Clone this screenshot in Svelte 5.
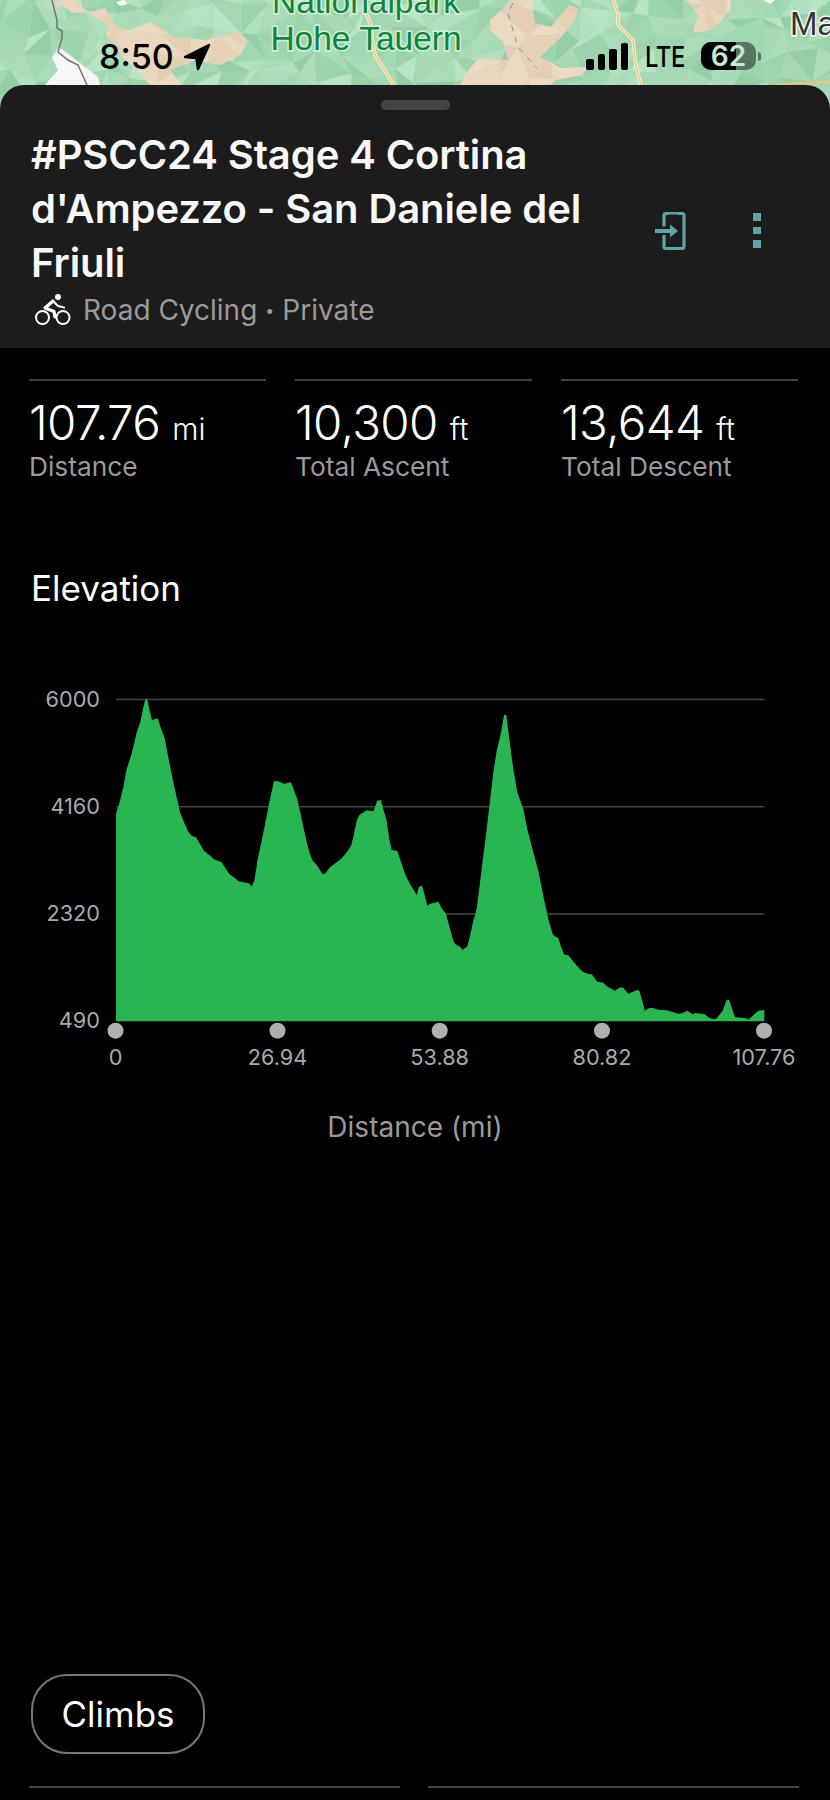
<script>
  // Elevation profile traced from the reference, [x, y] in page pixels relative to the chart box
  const left = [78,405,90,365,100,325,110,270,120,240,130,205,140,160,152,125,160,85,166,61,172,61,178,90,186,124,194,120,203,118,210,140,224,178,232,220,240,260,250,310,260,355,270,400,282,430,295,458,305,470,318,475,330,495,342,515,355,526,372,541,395,550,408,570,418,585,430,593,445,606,460,610,475,612,486,622,493,605,503,540,515,485,530,410,540,360,552,307,562,306,583,314,603,310,622,360,635,420,650,490,660,525,668,545,680,558,698,586,705,584,720,565,740,550,755,538,770,520,783,500,790,475,800,425,808,408,830,394,850,397,862,365,872,363,880,390,890,425,898,480,905,513,922,515,935,555,945,585,960,615,980,648,986,625,995,619,1002,640,1012,680,1020,674,1045,668,1055,688,1068,705,1080,750,1090,785,1098,798,1108,802,1118,812,1132,802,1140,770,1150,725,1160,690,1170,610,1180,530,1190,450];
  const right = [150,365,160,280,170,215,182,165,192,108,199,108,208,180,220,270,232,340,250,390,262,450,280,520,295,575,310,650,325,720,338,765,345,772,355,778,362,800,372,826,385,829,398,845,412,862,428,878,445,885,455,886,472,908,490,911,500,922,525,935,540,925,550,926,565,945,585,935,597,933,607,965,614,995,628,987,640,987,655,992,680,994,715,1004,725,1003,742,995,758,1006,765,1002,793,1005,805,1015,820,1021,828,1020,848,995,860,962,867,962,885,1015,915,1017,925,1022,955,995,973,993];

  const pts = [];
  for (let i = 0; i < left.length; i += 2) pts.push([90 + left[i] / 3, left[i + 1] / 3]);
  for (let i = 0; i < right.length; i += 2) pts.push([440 + right[i] / 3, right[i + 1] / 3]);
  const baseY = 1027 / 3;
  const area =
    `M${pts[0][0].toFixed(1)} ${baseY.toFixed(1)} ` +
    pts.map((p) => `L${p[0].toFixed(1)} ${p[1].toFixed(1)}`).join(' ') +
    ` L${pts[pts.length - 1][0].toFixed(1)} ${baseY.toFixed(1)} Z`;

  const yTicks = [
    { label: '6000', y: 20.5 },
    { label: '4160', y: 127.7 },
    { label: '2320', y: 235 },
    { label: '490', y: baseY }
  ];
  const xTicks = [
    { label: '0', x: 115.5 },
    { label: '26.94', x: 277.5 },
    { label: '53.88', x: 439.7 },
    { label: '80.82', x: 602 },
    { label: '107.76', x: 764 }
  ];

  const stats = [
    { value: '107.76', unit: 'mi', label: 'Distance' },
    { value: '10,300', unit: 'ft', label: 'Total Ascent' },
    { value: '13,644', unit: 'ft', label: 'Total Descent' }
  ];

  // Faceted terrain: a jittered triangle mesh with a small seeded generator
  function mesh(seed, palette) {
    let s = seed;
    const rnd = () => {
      s = (s * 16807) % 2147483647;
      return (s - 1) / 2147483646;
    };
    const step = 26;
    const grid = [];
    for (let r = 0; r <= 6; r++) {
      const row = [];
      for (let c = 0; c <= 34; c++) {
        row.push([c * step - 20 + rnd() * 20 - 10, r * 22 - 10 + rnd() * 18 - 9]);
      }
      grid.push(row);
    }
    const tris = [];
    for (let r = 0; r < 6; r++) {
      for (let c = 0; c < 34; c++) {
        const a = grid[r][c], b = grid[r][c + 1], d = grid[r + 1][c], e = grid[r + 1][c + 1];
        const flip = rnd() > 0.5;
        const t1 = flip ? [a, b, e] : [a, b, d];
        const t2 = flip ? [a, e, d] : [b, e, d];
        for (const t of [t1, t2]) {
          tris.push({
            p: t.map((q) => q[0].toFixed(1) + ',' + q[1].toFixed(1)).join(' '),
            f: palette[Math.floor(rnd() * palette.length)]
          });
        }
      }
    }
    return tris;
  }
  const greens = mesh(4711, ['#a4d8b4', '#abdcba', '#9cd3ad', '#b3e0c0', '#94cea6', '#a8dab7', '#bae4c6', '#a0d6b1']);
  const tans = mesh(913, ['#ead6bd', '#e7d2b8', '#ecdac3', '#e5cfb4', '#ebd8bf']);
  const beige =
    'M58 0 50 10 62 5 72 13 90 12 105 8 112 20 120 28 130 30 150 22 160 28 175 37 205 40 240 32 248 42 240 55 220 65 195 60 170 70 182 85 150 85 140 72 125 60 106 35 108 25 90 14 75 0Z ' +
    'M513 0 532 0 535 23 551 27 569 5 578 8 574 22 561 37 540 57 561 68 588 67 582 75 556 80 550 85 460 85 466 73 479 58 508 60 503 42 490 30 490 20Z ' +
    'M686 0 731 0 730 10 720 23 710 30 693 33 698 15Z';
</script>

<div class="page">
  <div class="map">
    <svg class="terrain" viewBox="0 0 830 110" width="830" height="110" aria-hidden="true">
      <defs>
        <clipPath id="tan"><path d={beige} /></clipPath>
      </defs>
      <rect width="830" height="110" fill="#a4d8b4" />
      {#each greens as t}
        <polygon points={t.p} fill={t.f} stroke={t.f} stroke-width="0.6" />
      {/each}
      <g clip-path="url(#tan)">
        {#each tans as t}
          <polygon points={t.p} fill={t.f} stroke={t.f} stroke-width="0.6" />
        {/each}
      </g>
      <path d="M58 48 52 58 58 70 45 85 100 85 98 77 80 63 63 50Z" fill="#f6f6f6" />
      <path d="M116 2 124 0 128 4 120 6Z M763 0 775 0 770 4Z" fill="#fafafa" />
      <path d="M52 0 57 20 57 28 62 31 62 38 58 52 68 60 78 65 87 85" fill="none" stroke="#6f7672" stroke-width="1.5" />
      <path d="M365 10 370 23 375 55 394 85" fill="none" stroke="#fff3d8" stroke-width="3.5" />
      <path d="M365 10 370 23 375 55 394 85" fill="none" stroke="#efc57c" stroke-width="1.6" />
      <path d="M613 0 618 13 618 25 633 40 636 67 641 85" fill="none" stroke="#fff3d8" stroke-width="3.5" />
      <path d="M613 0 618 13 618 25 633 40 636 67 641 85" fill="none" stroke="#efc57c" stroke-width="1.6" />
      <path d="M776 85 800 83 830 82" fill="none" stroke="#efc57c" stroke-width="2" />
      <path d="M513 3 508 13 518 47 537 68" fill="none" stroke="#8b8f9e" stroke-width="1" stroke-dasharray="6 6" />
      <text class="park" x="366" y="13" text-anchor="middle">Nationalpark</text>
      <text class="park" x="366" y="50" text-anchor="middle">Hohe Tauern</text>
      <text class="town" x="790" y="35">Ma</text>
    </svg>

    <div class="status">
      <div class="clock">
        <span>8:50</span>
        <svg class="arrow" width="28" height="28" viewBox="0 0 28 28" aria-hidden="true">
          <path d="M2 14 26 2 15 26 13.500 15Z" fill="#000" stroke="#000" stroke-width="2.500" stroke-linejoin="round" />
        </svg>
      </div>
      <div class="radio">
        <div class="bars">
          <i class="b1"></i><i class="b2"></i><i class="b3"></i><i class="b4"></i>
        </div>
        <span class="lte">LTE</span>
        <div class="battery">
          <div class="level"></div>
          <span>62</span>
        </div>
        <div class="tip"></div>
      </div>
    </div>
  </div>

  <header class="sheet">
    <div class="handle"></div>
    <div class="head">
      <div class="heading">
        <h1>#PSCC24 Stage 4 Cortina d'Ampezzo - San Daniele del Friuli</h1>
        <div class="sub">
          <svg width="38" height="34" viewBox="0 0 38 34" aria-hidden="true">
            <circle cx="9.500" cy="24.500" r="6.500" fill="none" stroke="#fff" stroke-width="2" />
            <circle cx="30" cy="24.500" r="6.500" fill="none" stroke="#fff" stroke-width="2" />
            <circle cx="25" cy="4" r="3" fill="#fff" />
            <path d="M20 8 12 15 21 18.500 22 24" fill="none" stroke="#fff" stroke-width="3.200" stroke-linejoin="round" stroke-linecap="round" />
            <path d="M20 8 25 13 31 14.500" fill="none" stroke="#fff" stroke-width="2.200" stroke-linecap="round" stroke-linejoin="round" />
          </svg>
          <span>Road Cycling</span>
          <span class="dot">•</span>
          <span>Private</span>
        </div>
      </div>
      <div class="actions">
        <svg width="32" height="38" viewBox="0 0 32 38" aria-hidden="true">
          <path d="M10 14.500V3.500A2 2 0 0 1 12 1.500H28A2 2 0 0 1 30 3.500V34.500A2 2 0 0 1 28 36.500H12A2 2 0 0 1 10 34.500V23" fill="none" stroke="#5fa3ad" stroke-width="3.200" />
          <rect x="15" y="2.500" width="9" height="1.800" fill="#1c1c1c" />
          <path d="M1 17H16V12.500L24 19 16 25.500V21H1Z" fill="#5fa3ad" />
        </svg>
        <div class="kebab"><i></i><i></i><i></i></div>
      </div>
    </div>
  </header>

  <section class="stats">
    {#each stats as s}
      <div class="stat">
        <div class="value">{s.value}<small>{s.unit}</small></div>
        <div class="label">{s.label}</div>
      </div>
    {/each}
  </section>

  <h2 class="section-title">Elevation</h2>

  <svg class="chart" width="830" height="400" viewBox="0 0 830 400" role="img" aria-label="Elevation profile">
    {#each yTicks.slice(0, 3) as t}
      <line x1="116" x2="764.500" y1={t.y} y2={t.y} stroke="#444" stroke-width="1.500" />
    {/each}
    <path d={area} fill="#29b551" />
    {#each yTicks as t}
      <text class="tick" x="100" y={t.y + 7} text-anchor="end">{t.label}</text>
    {/each}
    {#each xTicks as t}
      <circle cx={t.x} cy="351.700" r="8" fill="#b0b0b0" />
      <text class="tick" x={t.x} y="386" text-anchor="middle">{t.label}</text>
    {/each}
  </svg>

  <div class="axis-title">Distance (mi)</div>

  <button class="pill" type="button">Climbs</button>

  <div class="bottom-rules"><div></div><div></div></div>
</div>

<style>
  :global(body) {
    margin: 0;
    background: #000;
  }
  .page {
    width: 830px;
    height: 1800px;
    overflow: hidden;
    background: #000;
    font-family: Inter, "Liberation Sans", sans-serif;
    color: #fff;
  }
  .map {
    position: relative;
    height: 110px;
    margin-bottom: -25px;
  }
  .terrain {
    position: absolute;
    inset: 0;
    display: block;
  }
  .park {
    font-family: "Liberation Sans", sans-serif;
    font-size: 33.500px;
    fill: #0f853a;
    stroke: #d6efdc;
    stroke-width: 3px;
    paint-order: stroke;
  }
  .town {
    font-family: "Liberation Sans", sans-serif;
    font-size: 33px;
    fill: #333;
    stroke: #f2f7f3;
    stroke-width: 3px;
    paint-order: stroke;
  }
  .status {
    position: relative;
    display: flex;
    justify-content: space-between;
    padding: 38px 74px 0 99px;
    color: #000;
  }
  .clock {
    display: flex;
    align-items: center;
    gap: 9px;
    height: 36px;
    font-size: 34px;
    font-weight: 500;
  }
  .arrow {
    margin-top: 2px;
  }
  .radio {
    display: flex;
    align-items: center;
    height: 36px;
  }
  .bars {
    display: flex;
    align-items: flex-end;
    gap: 4px;
    height: 27px;
    margin-right: 17px;
  }
  .bars i {
    display: block;
    width: 7.500px;
    border-radius: 2px;
    background: #000;
  }
  .b1 { height: 11px; }
  .b2 { height: 16px; }
  .b3 { height: 21px; }
  .b4 { height: 27px; }
  .lte {
    display: block;
    width: 56px;
    font-size: 29px;
    font-weight: 500;
    letter-spacing: -0.5px;
    transform: scaleX(0.82);
    transform-origin: left center;
  }
  .battery {
    position: relative;
    width: 55px;
    height: 28px;
    border-radius: 10px;
    overflow: hidden;
    background: rgba(0, 0, 0, 0.45);
    display: flex;
    align-items: center;
    justify-content: center;
  }
  .level {
    position: absolute;
    inset: 0 20px 0 0;
    background: #000;
  }
  .battery span {
    position: relative;
    font-size: 28px;
    font-weight: 600;
    color: #c6e8cf;
  }
  .tip {
    width: 3px;
    height: 9px;
    margin-left: 2px;
    margin-right: -5px;
    border-radius: 0 3px 3px 0;
    background: rgba(0, 0, 0, 0.45);
  }
  .sheet {
    position: relative;
    height: 263px;
    box-sizing: border-box;
    background: #1c1c1c;
    border-radius: 24px 24px 0 0;
    padding-top: 15px;
  }
  .handle {
    width: 69px;
    height: 10px;
    margin: 0 auto;
    border-radius: 5px;
    background: #454545;
  }
  .head {
    display: flex;
    align-items: center;
    justify-content: space-between;
    padding: 0 69px 0 31px;
    margin-top: 18px;
  }
  .heading {
    width: 570px;
  }
  h1 {
    margin: 0;
    font-size: 40px;
    line-height: 54px;
    font-weight: 600;
    letter-spacing: -0.1px;
    color: #f8f8f8;
  }
  .sub {
    display: flex;
    align-items: center;
    gap: 8px;
    height: 34px;
    margin-top: 3px;
    font-size: 28px;
    color: #9a9a9a;
  }
  .sub svg {
    margin-right: 4px;
    margin-left: 2px;
  }
  .dot {
    font-size: 16px;
  }
  .actions {
    display: flex;
    align-items: center;
    gap: 67px;
    margin-top: 6px;
  }
  .kebab {
    display: flex;
    flex-direction: column;
    gap: 6px;
  }
  .kebab i {
    display: block;
    width: 8px;
    height: 7.500px;
    background: #5fa3ad;
  }
  .stats {
    display: grid;
    grid-template-columns: repeat(3, 237px);
    column-gap: 29px;
    padding-left: 29px;
    margin-top: 31px;
  }
  .stat {
    border-top: 2px solid #444;
    padding-top: 16px;
  }
  .value {
    font-size: 47.500px;
    line-height: 52px;
    font-weight: 300;
    letter-spacing: -0.6px;
  }
  .value small {
    font-size: 30px;
    font-weight: 300;
    margin-left: 12px;
    letter-spacing: 0;
  }
  .label {
    font-size: 26.300px;
    line-height: 32px;
    color: #9a9a9a;
    margin-top: -4px;
  }
  .section-title {
    margin: 83px 0 0 31px;
    font-size: 35px;
    line-height: 44px;
    font-weight: 400;
  }
  .chart {
    display: block;
    margin-top: 69px;
  }
  .tick {
    font-family: Inter, "Liberation Sans", sans-serif;
    font-size: 21.700px;
    fill: #aaa;
  }
  .axis-title {
    text-align: center;
    margin-top: 30px;
    font-size: 28px;
    line-height: 36px;
    color: #9a9a9a;
  }
  .pill {
    display: block;
    box-sizing: border-box;
    width: 174px;
    height: 80px;
    margin: 529px 0 0 31px;
    border: 2px solid #777;
    border-radius: 36px;
    background: transparent;
    color: #fff;
    font: 400 35px Inter, "Liberation Sans", sans-serif;
  }
  .bottom-rules {
    display: grid;
    grid-template-columns: 371px 371px;
    column-gap: 28px;
    padding-left: 29px;
    margin-top: 32px;
  }
  .bottom-rules div {
    border-top: 2px solid #444;
  }
</style>
